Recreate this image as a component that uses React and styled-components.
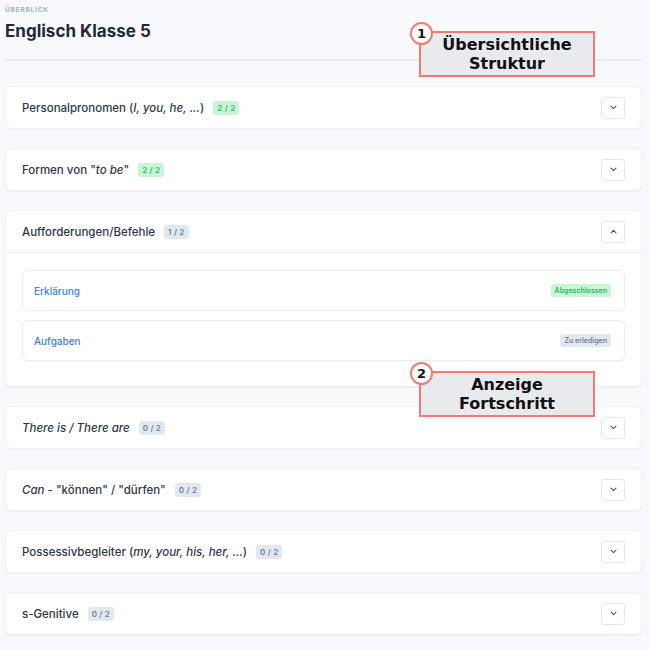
import React from "react";
import styled, { createGlobalStyle } from "styled-components";

const GlobalStyle = createGlobalStyle`
  body {
    margin: 0;
    background: #f7f9fc;
    font-family: Inter, "Noto Sans", sans-serif;
  }
`;

const topics = [
  { title: <>Personalpronomen (<em>I, you, he, ...</em>)</>, done: 2 },
  { title: <>Formen von "<em>to be</em>"</>, done: 2 },
  {
    title: <>Aufforderungen/Befehle</>,
    done: 1,
    open: true,
    items: [
      { name: "Erklärung", finished: true },
      { name: "Aufgaben", finished: false },
    ],
  },
  { title: <em>There is / There are</em>, done: 0 },
  { title: <><em>Can</em> - "können" / "dürfen"</>, done: 0 },
  { title: <>Possessivbegleiter (<em>my, your, his, her, ...</em>)</>, done: 0 },
  { title: <>s-Genitive</>, done: 0 },
];

function Chevron({ up }) {
  return (
    <svg width="7" height="5" viewBox="0 0 7 5">
      <polyline
        points={up ? "1,3.8 3.5,1.3 6,3.8" : "1,1.2 3.5,3.7 6,1.2"}
        fill="none"
        stroke="#4a5568"
        strokeWidth="1.1"
        strokeLinecap="round"
        strokeLinejoin="round"
      />
    </svg>
  );
}

function App() {
  return (
    <Page>
      <GlobalStyle />
      <Label>Überblick</Label>
      <Title>Englisch Klasse 5</Title>
      <Divider />
      <List>
        {topics.map((t, i) => (
          <Card key={i}>
            <CardHeader open={t.open}>
              <HeaderText>
                {t.title}
                <Count complete={t.done === 2}>{t.done} / 2</Count>
              </HeaderText>
              <ToggleButton>
                <Chevron up={t.open} />
              </ToggleButton>
            </CardHeader>
            {t.open && (
              <CardBody>
                {t.items.map((item) => (
                  <SubCard key={item.name}>
                    <SubLink>{item.name}</SubLink>
                    <Status finished={item.finished}>
                      {item.finished ? "Abgeschlossen" : "Zu erledigen"}
                    </Status>
                  </SubCard>
                ))}
              </CardBody>
            )}
          </Card>
        ))}
      </List>

      <Callout top={22}>
        <Number>1</Number>
        <CalloutBox>
          Übersichtliche
          <br />
          Struktur
        </CalloutBox>
      </Callout>
      <Callout top={362}>
        <Number>2</Number>
        <CalloutBox>
          Anzeige
          <br />
          Fortschritt
        </CalloutBox>
      </Callout>
    </Page>
  );
}

const Page = styled.div`
  position: relative;
  padding: 6px 8px 20px 5px;
`;

const Label = styled.div`
  font-size: 6.5px;
  font-weight: 700;
  letter-spacing: 0.8px;
  text-transform: uppercase;
  color: #9fb0c8;
  line-height: 8px;
`;

const Title = styled.h1`
  margin: 5px 0 0;
  font-size: 17px;
  font-weight: 700;
  line-height: 24px;
  color: #1f2937;
`;

const Divider = styled.div`
  margin-top: 16px;
  height: 2px;
  background: #e9eef5;
`;

const List = styled.div`
  margin-top: 25px;
  display: flex;
  flex-direction: column;
  gap: 19px;
`;

const Card = styled.div`
  background: #fff;
  border: 1px solid #eef1f6;
  border-radius: 6px;
  box-shadow: 0 1px 2px rgba(30, 41, 59, 0.04);
`;

const CardHeader = styled.div`
  height: 41px;
  display: flex;
  align-items: center;
  justify-content: space-between;
  padding: 0 16px;
  border-bottom: ${(p) => (p.open ? "1px solid #edf1f6" : "none")};
`;

const HeaderText = styled.div`
  display: flex;
  align-items: center;
  font-size: 11.5px;
  font-weight: 500;
  color: #2d3748;
  white-space: pre;

  em {
    font-style: italic;
  }
`;

const Count = styled.span`
  margin-left: 9px;
  padding: 2px 4px;
  border-radius: 3px;
  font-size: 8px;
  font-weight: 600;
  letter-spacing: 0.2px;
  background: ${(p) => (p.complete ? "#c6f6d5" : "#e2e8f0")};
  color: ${(p) => (p.complete ? "#38b56a" : "#718096")};
`;

const ToggleButton = styled.div`
  width: 22px;
  height: 20px;
  border: 1px solid #e2e8f0;
  border-radius: 3px;
  display: flex;
  align-items: center;
  justify-content: center;
  background: #fff;
`;

const CardBody = styled.div`
  padding: 17px 16px 25px;
  display: flex;
  flex-direction: column;
  gap: 9px;
`;

const SubCard = styled.div`
  height: 39px;
  border: 1px solid #e9edf4;
  border-radius: 6px;
  display: flex;
  align-items: center;
  justify-content: space-between;
  padding: 0 13px 0 11px;
  box-shadow: 0 1px 2px rgba(30, 41, 59, 0.03);
`;

const SubLink = styled.span`
  font-size: 10px;
  font-weight: 500;
  color: #3b82d6;
`;

const Status = styled.span`
  padding: 2px 4px;
  border-radius: 3px;
  font-size: 7px;
  font-weight: 600;
  background: ${(p) => (p.finished ? "#c6f6d5" : "#e2e8f0")};
  color: ${(p) => (p.finished ? "#2fb866" : "#718096")};
`;

const Callout = styled.div`
  position: absolute;
  left: 410px;
  top: ${(p) => p.top}px;
  width: 186px;
  height: 55px;
`;

const Number = styled.div`
  position: absolute;
  left: 0;
  top: 0;
  z-index: 2;
  width: 19px;
  height: 19px;
  border: 2px solid #f47a6f;
  border-radius: 50%;
  background: #fff;
  display: flex;
  align-items: center;
  justify-content: center;
  font-family: "DejaVu Sans", sans-serif;
  font-weight: 700;
  font-size: 13px;
  color: #111;
`;

const CalloutBox = styled.div`
  position: absolute;
  left: 9px;
  top: 9px;
  width: 172px;
  height: 42px;
  border: 2px solid #f47a6f;
  background: #e8eaee;
  display: flex;
  align-items: center;
  justify-content: center;
  text-align: center;
  font-family: "DejaVu Sans", sans-serif;
  font-weight: 700;
  font-size: 16px;
  line-height: 19px;
  color: #111;
`;

export default App;
